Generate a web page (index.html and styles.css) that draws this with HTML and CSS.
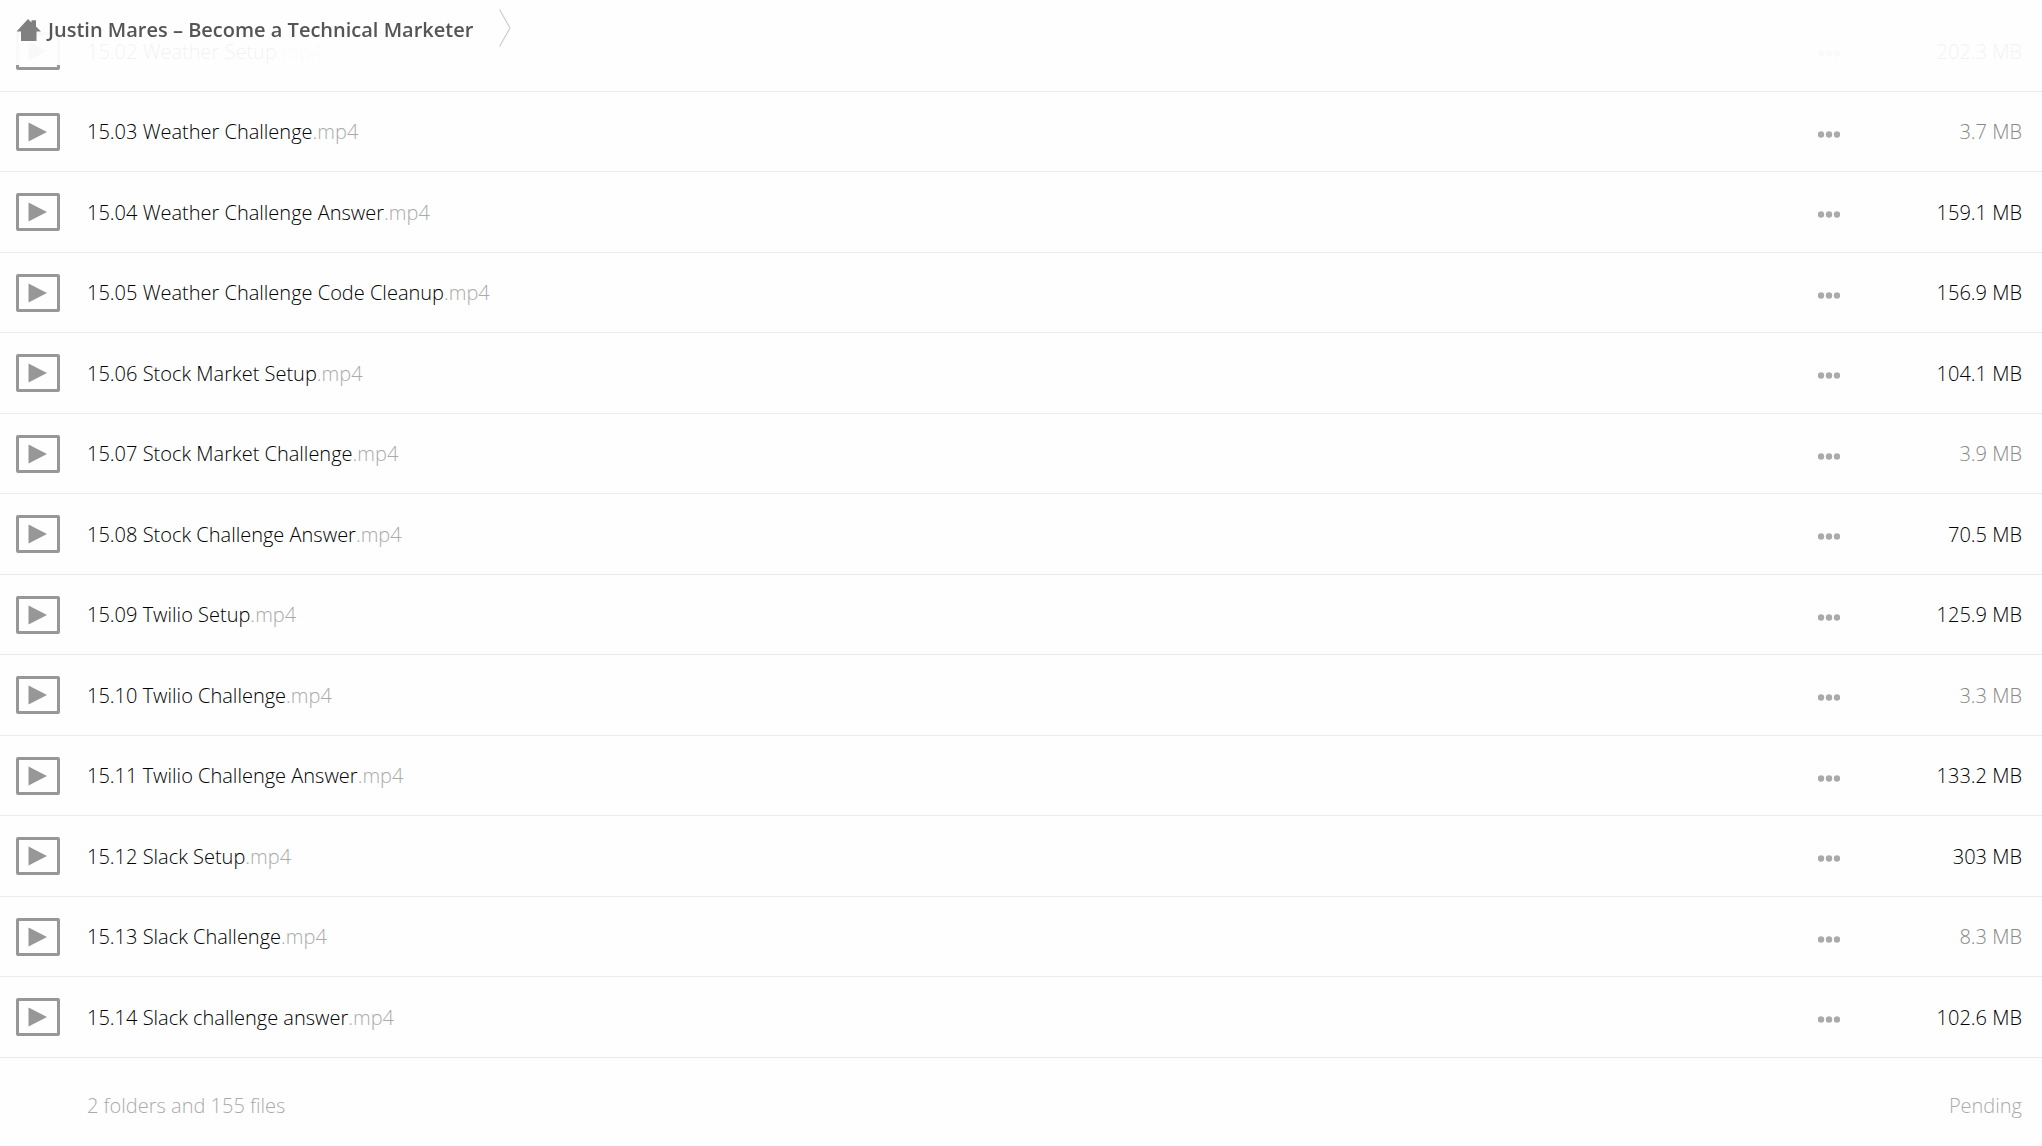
FILE: index.html
```html
<!DOCTYPE html>
<html lang="en">
<head>
    <meta charset="UTF-8">
    <meta name="viewport" content="width=device-width, initial-scale=1">
    <title>Justin Mares – Become a Technical Marketer</title>
    <link rel="stylesheet" href="styles.css">
</head>
<body>
    <!-- shared icons -->
    <svg class="sprite" width="0" height="0" aria-hidden="true">
        <symbol id="icon-video" viewBox="0 0 44 38">
            <rect x="1.5" y="1.5" width="41" height="35" rx="0.5" fill="none" stroke="currentColor" stroke-width="3"/>
            <path d="M12.500 9.500L31 19L12.500 28.500Z" fill="currentColor"/>
        </symbol>
        <symbol id="icon-dots" viewBox="0 0 22 7">
            <circle cx="3" cy="3.5" r="3.2" fill="currentColor"/>
            <circle cx="11" cy="3.5" r="3.2" fill="currentColor"/>
            <circle cx="19" cy="3.5" r="3.2" fill="currentColor"/>
        </symbol>
    </svg>

    <header class="topbar">
        <nav class="breadcrumb">
            <a href="#" class="crumb">
                <svg class="icon-home" viewBox="0 0 24 22" aria-hidden="true"><path d="M11.500 0L15 3.500V1.300H19.500V7.500L24.500 12.500H20V22H4.500V12.500H0Z" fill="currentColor"/></svg>
                <span>Justin Mares – Become a Technical Marketer</span>
            </a>
            <svg class="crumb-arrow" viewBox="0 0 12 38" aria-hidden="true"><path d="M0.500 0.500L11 19L0.500 37.500" fill="none" stroke="currentColor" stroke-width="1.200"/></svg>
        </nav>
    </header>

    <main>
        <table class="files">
            <tbody>
                <tr>
                    <td class="icon"><svg class="icon-video"><use href="#icon-video"/></svg></td>
                    <td class="name"><a href="#">15.02 Weather Setup<span class="ext">.mp4</span></a></td>
                    <td class="actions"><button aria-label="More"><svg class="icon-dots"><use href="#icon-dots"/></svg></button></td>
                    <td class="size">202.3 MB</td>
                </tr>
                <tr>
                    <td class="icon"><svg class="icon-video"><use href="#icon-video"/></svg></td>
                    <td class="name"><a href="#">15.03 Weather Challenge<span class="ext">.mp4</span></a></td>
                    <td class="actions"><button aria-label="More"><svg class="icon-dots"><use href="#icon-dots"/></svg></button></td>
                    <td class="size small">3.7 MB</td>
                </tr>
                <tr>
                    <td class="icon"><svg class="icon-video"><use href="#icon-video"/></svg></td>
                    <td class="name"><a href="#">15.04 Weather Challenge Answer<span class="ext">.mp4</span></a></td>
                    <td class="actions"><button aria-label="More"><svg class="icon-dots"><use href="#icon-dots"/></svg></button></td>
                    <td class="size">159.1 MB</td>
                </tr>
                <tr>
                    <td class="icon"><svg class="icon-video"><use href="#icon-video"/></svg></td>
                    <td class="name"><a href="#">15.05 Weather Challenge Code Cleanup<span class="ext">.mp4</span></a></td>
                    <td class="actions"><button aria-label="More"><svg class="icon-dots"><use href="#icon-dots"/></svg></button></td>
                    <td class="size">156.9 MB</td>
                </tr>
                <tr>
                    <td class="icon"><svg class="icon-video"><use href="#icon-video"/></svg></td>
                    <td class="name"><a href="#">15.06 Stock Market Setup<span class="ext">.mp4</span></a></td>
                    <td class="actions"><button aria-label="More"><svg class="icon-dots"><use href="#icon-dots"/></svg></button></td>
                    <td class="size">104.1 MB</td>
                </tr>
                <tr>
                    <td class="icon"><svg class="icon-video"><use href="#icon-video"/></svg></td>
                    <td class="name"><a href="#">15.07 Stock Market Challenge<span class="ext">.mp4</span></a></td>
                    <td class="actions"><button aria-label="More"><svg class="icon-dots"><use href="#icon-dots"/></svg></button></td>
                    <td class="size small">3.9 MB</td>
                </tr>
                <tr>
                    <td class="icon"><svg class="icon-video"><use href="#icon-video"/></svg></td>
                    <td class="name"><a href="#">15.08 Stock Challenge Answer<span class="ext">.mp4</span></a></td>
                    <td class="actions"><button aria-label="More"><svg class="icon-dots"><use href="#icon-dots"/></svg></button></td>
                    <td class="size">70.5 MB</td>
                </tr>
                <tr>
                    <td class="icon"><svg class="icon-video"><use href="#icon-video"/></svg></td>
                    <td class="name"><a href="#">15.09 Twilio Setup<span class="ext">.mp4</span></a></td>
                    <td class="actions"><button aria-label="More"><svg class="icon-dots"><use href="#icon-dots"/></svg></button></td>
                    <td class="size">125.9 MB</td>
                </tr>
                <tr>
                    <td class="icon"><svg class="icon-video"><use href="#icon-video"/></svg></td>
                    <td class="name"><a href="#">15.10 Twilio Challenge<span class="ext">.mp4</span></a></td>
                    <td class="actions"><button aria-label="More"><svg class="icon-dots"><use href="#icon-dots"/></svg></button></td>
                    <td class="size small">3.3 MB</td>
                </tr>
                <tr>
                    <td class="icon"><svg class="icon-video"><use href="#icon-video"/></svg></td>
                    <td class="name"><a href="#">15.11 Twilio Challenge Answer<span class="ext">.mp4</span></a></td>
                    <td class="actions"><button aria-label="More"><svg class="icon-dots"><use href="#icon-dots"/></svg></button></td>
                    <td class="size">133.2 MB</td>
                </tr>
                <tr>
                    <td class="icon"><svg class="icon-video"><use href="#icon-video"/></svg></td>
                    <td class="name"><a href="#">15.12 Slack Setup<span class="ext">.mp4</span></a></td>
                    <td class="actions"><button aria-label="More"><svg class="icon-dots"><use href="#icon-dots"/></svg></button></td>
                    <td class="size">303 MB</td>
                </tr>
                <tr>
                    <td class="icon"><svg class="icon-video"><use href="#icon-video"/></svg></td>
                    <td class="name"><a href="#">15.13 Slack Challenge<span class="ext">.mp4</span></a></td>
                    <td class="actions"><button aria-label="More"><svg class="icon-dots"><use href="#icon-dots"/></svg></button></td>
                    <td class="size small">8.3 MB</td>
                </tr>
                <tr>
                    <td class="icon"><svg class="icon-video"><use href="#icon-video"/></svg></td>
                    <td class="name"><a href="#">15.14 Slack challenge answer<span class="ext">.mp4</span></a></td>
                    <td class="actions"><button aria-label="More"><svg class="icon-dots"><use href="#icon-dots"/></svg></button></td>
                    <td class="size">102.6 MB</td>
                </tr>
            </tbody>
            <tfoot>
                <tr>
                    <td class="icon"></td>
                    <td class="name">2 folders and 155 files</td>
                    <td class="actions"></td>
                    <td class="size">Pending</td>
                </tr>
            </tfoot>
        </table>
    </main>
</body>
</html>
```

FILE: styles.css
```css
* {
    box-sizing: border-box;
}

body {
    margin: 0;
    background-color: #fefefe;
    color: #000;
    font-family: "Open Sans", sans-serif;
    font-size: 20px;
    font-weight: 300;
    line-height: 28px;
}

a {
    color: inherit;
    text-decoration: none;
}

.sprite {
    position: absolute;
}

/* Top bar, the list scrolls under it */
.topbar {
    position: fixed;
    top: 0;
    left: 0;
    right: 0;
    z-index: 10;
    height: 65px;
    padding: 9px 16px;
    background-color: rgba(254, 254, 254, .95);
}

.breadcrumb {
    display: flex;
    align-items: flex-start;
    gap: 26px;
}

.crumb {
    display: flex;
    align-items: center;
    gap: 7px;
    height: 42px;
    color: #555;
    font-weight: 600;
}

.icon-home {
    width: 25px;
    height: 22px;
    color: #808080;
}

.crumb-arrow {
    width: 12px;
    height: 38px;
    color: #ccc;
}

/* File list */
main {
    padding-top: 11px;
}

.files {
    width: 100%;
    border-collapse: separate;
    border-spacing: 0;
    table-layout: fixed;
}

.files td {
    height: 81px;
    padding: 0;
    border-bottom: 1px solid #ebebeb;
    vertical-align: middle;
}

.files tr:nth-child(even) td {
    height: 80px;
}

.files .icon {
    width: 87px;
    padding-left: 16px;
}

.files .name,
.files .size {
    padding-top: 1px;
}

.files .actions {
    width: 80px;
    padding-bottom: 1px;
    text-align: center;
}

.files .size {
    width: 173px;
    padding-right: 20px;
    text-align: right;
}

.files .small {
    color: #888;
}

.ext {
    color: #aaa;
}

.icon-video {
    display: block;
    width: 44px;
    height: 38px;
    color: #979797;
}

.actions button {
    padding: 8px;
    border: none;
    background: none;
    color: #aaa;
    cursor: pointer;
}

.icon-dots {
    display: block;
    width: 22px;
    height: 7px;
}

.files tfoot td {
    height: 94px;
    border: none;
    color: #aaa;
}
```
